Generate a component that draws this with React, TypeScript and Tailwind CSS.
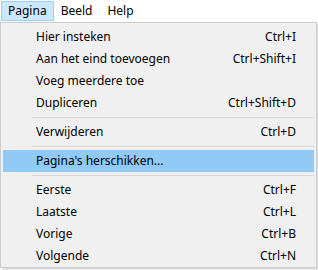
import React from "react";

type Entry = { label: string; shortcut?: string; active?: boolean } | "sep";

const items: Entry[] = [
  { label: "Hier insteken", shortcut: "Ctrl+I" },
  { label: "Aan het eind toevoegen", shortcut: "Ctrl+Shift+I" },
  { label: "Voeg meerdere toe" },
  { label: "Dupliceren", shortcut: "Ctrl+Shift+D" },
  "sep",
  { label: "Verwijderen", shortcut: "Ctrl+D" },
  "sep",
  { label: "Pagina's herschikken...", active: true },
  "sep",
  { label: "Eerste", shortcut: "Ctrl+F" },
  { label: "Laatste", shortcut: "Ctrl+L" },
  { label: "Vorige", shortcut: "Ctrl+B" },
  { label: "Volgende", shortcut: "Ctrl+N" },
];

export default function App() {
  return (
    <div className="w-[318px] h-[270px] bg-white text-[12px] text-black font-['Segoe_UI','Noto_Sans',sans-serif] overflow-hidden">
      <div className="flex h-[22px] items-stretch">
        <div className="px-[6px] ml-[1px] mt-[1px] h-[20px] flex items-center bg-[#cce8ff] border border-[#99d1ff]">
          Pagina
        </div>
        <div className="pl-[7px] pr-[8px] flex items-center">Beeld</div>
        <div className="px-[7px] flex items-center">Help</div>
      </div>
      <div className="w-[317px] bg-[#f0f0f0] border border-[#cccccc] pt-[3px] px-[2px] shadow-[2px_2px_2px_rgba(0,0,0,0.15)]">
        {items.map((it, i) =>
          it === "sep" ? (
            <div key={i} className="h-[7px] flex items-center pl-[29px]">
              <div className="h-px w-full bg-[#d7d7d7]" />
            </div>
          ) : (
            <div
              key={i}
              className={`h-[22px] flex items-center justify-between pl-[33px] pr-[18px] ${
                it.active ? "bg-[#91c9f7]" : ""
              }`}
            >
              <span>{it.label}</span>
              <span>{it.shortcut}</span>
            </div>
          )
        )}
      </div>
    </div>
  );
}
